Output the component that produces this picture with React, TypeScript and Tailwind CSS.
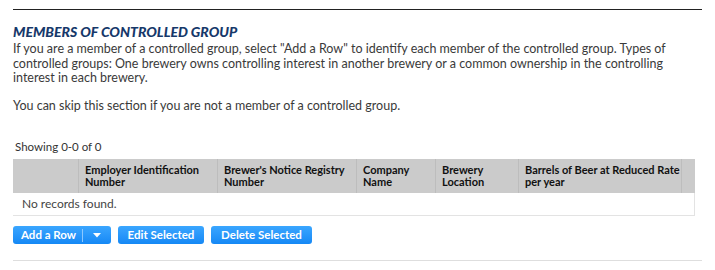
import React from "react";

const cols = [
  { w: "w-[66px]", lines: [] as string[] },
  { w: "w-[139px]", lines: ["Employer Identification", "Number"] },
  { w: "w-[139px]", lines: ["Brewer's Notice Registry", "Number"] },
  { w: "w-[79px]", lines: ["Company", "Name"] },
  { w: "w-[83px]", lines: ["Brewery", "Location"] },
  { w: "w-[163px]", lines: ["Barrels of Beer at Reduced Rate", "per year"] },
];

const btn =
  "h-[18px] rounded-[3px] bg-gradient-to-b from-[#3aa6ff] to-[#1488f5] text-white font-bold text-[11.5px] leading-[18px]";

export default function App() {
  return (
    <div className="w-[715px] h-[270px] bg-white pt-[9px] px-[13px] text-[#3a3a3a]" style={{ fontFamily: "Lato, 'Open Sans', sans-serif" }}>
      <div className="w-[689px] border-t border-[#222]" />
      <h2 className="mt-[14px] text-[14px] leading-[16px] font-black italic text-[#16386a]">
        MEMBERS OF CONTROLLED GROUP
      </h2>
      <p className="mt-[2px] text-[12.5px] leading-[14.5px] w-[690px]">
        If you are a member of a controlled group, select "Add a Row" to identify each member of the controlled group. Types of controlled groups: One brewery owns controlling interest in another brewery or a common ownership in the controlling interest in each brewery.
      </p>
      <p className="mt-[13px] text-[12.5px] leading-[14.5px]">
        You can skip this section if you are not a member of a controlled group.
      </p>
      <div className="mt-[27px] pl-[2px] text-[11.5px] leading-[13px] text-[#333]">Showing 0-0 of 0</div>
      <div className="mt-[6px] w-[682px]">
        <div className="flex h-[34px] bg-[#cbcbcb]">
          {cols.map((c, i) => (
            <div
              key={i}
              className={`${c.w} shrink-0 border-r border-[#bdbdbd] pl-[6px] pt-[5px] text-[11px] leading-[12px] font-bold text-[#111] whitespace-nowrap`}
            >
              {c.lines.map((l, j) => (
                <div key={j}>{l}</div>
              ))}
            </div>
          ))}
          <div className="flex-1" />
        </div>
        <div className="h-[23px] border-b border-r border-[#e3e3e3] pl-[9px] text-[12px] leading-[22px] text-[#444]">
          No records found.
        </div>
      </div>
      <div className="mt-[10px] flex gap-[7px]">
        <div className={`${btn} flex w-[98px] items-center`}>
          <span className="pl-[8px] pr-[6px]">Add a Row</span>
          <span className="h-[13px] border-l border-[#8cc8ff]" />
          <span className="flex-1 flex justify-center">
            <svg width="8" height="5" viewBox="0 0 8 5"><path d="M0 0h8L4 4.5z" fill="white" /></svg>
          </span>
        </div>
        <div className={`${btn} w-[86px] text-center`}>Edit Selected</div>
        <div className={`${btn} w-[101px] text-center`}>Delete Selected</div>
      </div>
      <div className="mt-[16px] w-[689px] border-t border-[#dedede]" />
    </div>
  );
}
